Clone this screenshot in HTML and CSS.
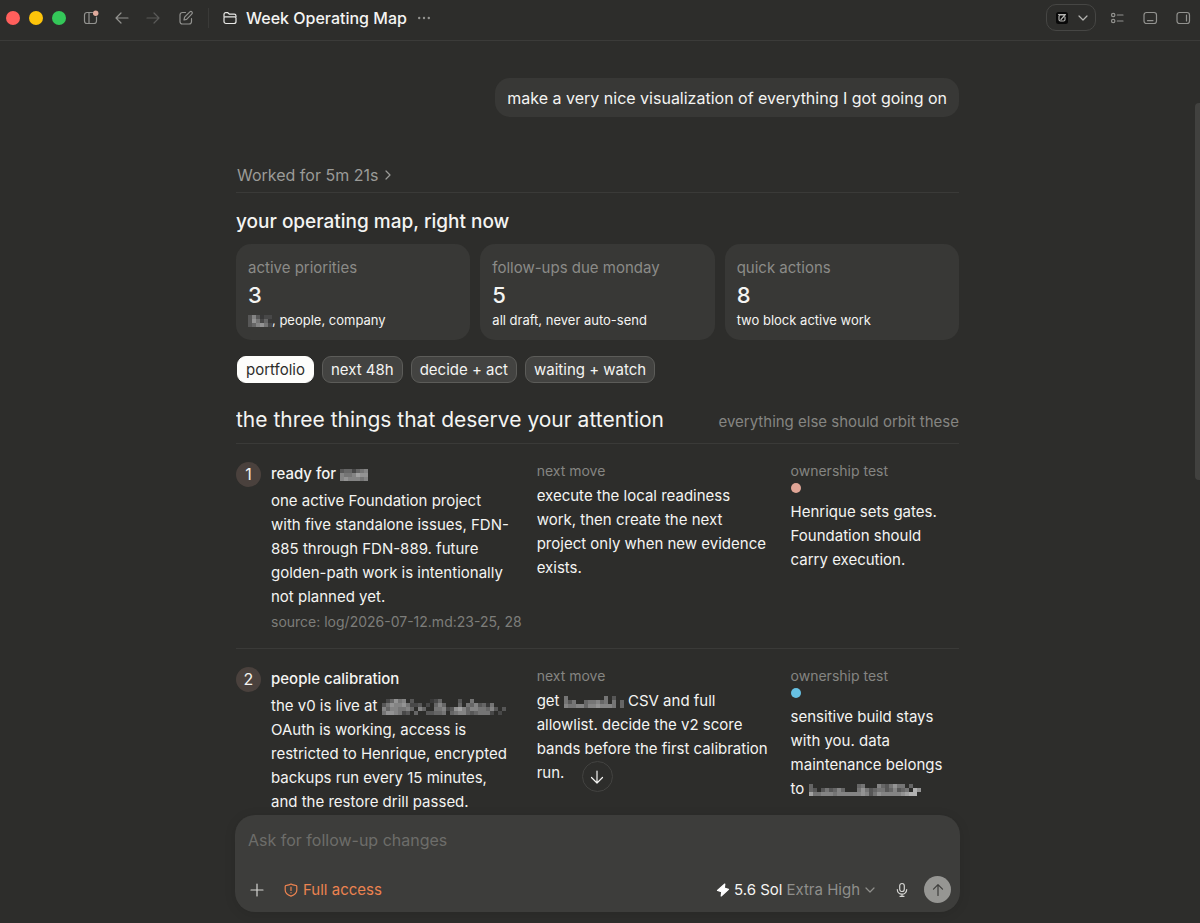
FILE: index.html
```html
<!DOCTYPE html>
<html lang="en">
<head>
<meta charset="utf-8">
<title>Week Operating Map</title>
<link rel="stylesheet" href="styles.css">
</head>
<body>
<header class="topbar">
  <div class="lights"><span class="light red"></span><span class="light yellow"></span><span class="light green"></span></div>
  <nav class="tools" aria-label="Window">
    <button class="icon-btn" aria-label="Toggle sidebar"><svg width="18" height="18" viewBox="0 0 18 18"><path d="M10.500 3.500H5A2.500 2.500 0 0 0 2.500 6v6A2.500 2.500 0 0 0 5 14.500h7A2.500 2.500 0 0 0 14.500 12V8M7 3.500v11"/><circle class="notice" cx="13.700" cy="4.300" r="2.700"/></svg></button>
    <button class="icon-btn" aria-label="Back"><svg width="18" height="18" viewBox="0 0 18 18"><path d="M15 9H3.500M8 4 3 9l5 5"/></svg></button>
    <button class="icon-btn dim" aria-label="Forward"><svg width="18" height="18" viewBox="0 0 18 18"><path d="M3 9h11.500M10 4l5 5-5 5"/></svg></button>
    <button class="icon-btn compose" aria-label="New chat"><svg width="18" height="18" viewBox="0 0 18 18"><path d="M8.500 3.500H5.500A2.500 2.500 0 0 0 3 6v6.500A2.500 2.500 0 0 0 5.500 15H12a2.500 2.500 0 0 0 2.500-2.500v-3M7 11l.6-2.800 5.300-5.300a1.300 1.300 0 0 1 2 2L9.600 10.300z"/></svg></button>
  </nav>
  <div class="title-group">
    <svg class="folder" width="16" height="16" viewBox="0 0 16 16"><path d="M2 6.800V4.500A1.800 1.800 0 0 1 3.800 2.700h2l1.700 1.500h4.700A1.800 1.800 0 0 1 14 6v.8M3.300 6.800h9.400a1.300 1.300 0 0 1 1.300 1.300v3.400a2 2 0 0 1-2 2H4a2 2 0 0 1-2-2V8.100a1.300 1.300 0 0 1 1.300-1.300z"/></svg>
    <h1 class="title">Week Operating Map</h1>
    <button class="icon-btn more" aria-label="More"><svg width="18" height="18" viewBox="0 0 18 18"><g class="solid"><circle cx="4.200" cy="9" r="1.200"/><circle cx="9" cy="9" r="1.200"/><circle cx="13.800" cy="9" r="1.200"/></g></svg></button>
  </div>
  <div class="right-tools">
    <button class="open-in" aria-label="Open in"><svg width="14" height="14" viewBox="0 0 14 14"><rect class="app" x="1" y="1" width="12" height="12" rx="2.500"/><path d="M10 6v2.500A1.500 1.500 0 0 1 8.500 10h-3A1.500 1.500 0 0 1 4 8.500v-3A1.500 1.500 0 0 1 5.500 4H10L6 8.500M3.500 3.500h7"/></svg><svg width="12" height="12" viewBox="0 0 12 12"><path d="m2 4 4 4 4-4"/></svg></button>
    <button class="icon-btn" aria-label="Tasks"><svg width="18" height="18" viewBox="0 0 18 18"><circle cx="5.200" cy="6" r="1.700"/><circle cx="5.200" cy="12" r="1.700"/><path d="M9.300 6H15M9.300 12H15"/></svg></button>
    <button class="icon-btn" aria-label="Bottom panel"><svg width="18" height="18" viewBox="0 0 18 18"><rect x="3" y="3.500" width="12.500" height="11" rx="2.500"/><path d="M6.500 11.700h5.500"/></svg></button>
    <button class="icon-btn" aria-label="Side panel"><svg width="18" height="18" viewBox="0 0 18 18"><rect x="3" y="3.500" width="12.500" height="11" rx="2.500"/><path d="M12.500 6v6"/></svg></button>
  </div>
</header>

<div class="workspace">
  <div class="pane">
    <main class="conversation">
      <p class="bubble">make a very nice visualization of everything I got going on</p>
      <button class="worked">Worked for 5m 21s <svg width="10" height="10" viewBox="0 0 10 10"><path d="m3 1 4 4-4 4"/></svg></button>

      <h2 class="heading">your operating map, right now</h2>
      <div class="stats">
        <section class="stat"><h3 class="stat-label">active priorities</h3><p class="stat-value">3</p><p class="stat-note"><span class="mosaic" data-rows="585344 597463 568974"></span>, people, company</p></section>
        <section class="stat"><h3 class="stat-label">follow-ups due monday</h3><p class="stat-value">5</p><p class="stat-note">all draft, never auto-send</p></section>
        <section class="stat"><h3 class="stat-label">quick actions</h3><p class="stat-value">8</p><p class="stat-note">two block active work</p></section>
      </div>

      <div class="chips">
        <button class="chip selected">portfolio</button>
        <button class="chip">next 48h</button>
        <button class="chip">decide + act</button>
        <button class="chip">waiting + watch</button>
      </div>

      <div class="section-head">
        <h2 class="section-title">the three things that deserve your attention</h2>
        <p class="section-note">everything else should orbit these</p>
      </div>

      <article class="priority">
        <div class="summary">
          <span class="number">1</span>
          <div class="summary-text">
            <h3 class="name">ready for <span class="mosaic" data-rows="5664678 8778a99 8988878"></span></h3>
            <p class="copy">one active Foundation project with five standalone issues, FDN-<wbr>885 through FDN-889. future golden-path work is intentionally not planned yet.</p>
            <p class="source">source: log/2026-07-12.md:23-25, 28</p>
          </div>
        </div>
        <div class="detail"><h4 class="label">next move</h4><p class="copy">execute the local readiness work, then create the next project only when new evidence exists.</p></div>
        <div class="detail"><h4 class="label">ownership test</h4><span class="dot coral"></span><p class="copy">Henrique sets gates. Foundation should carry execution.</p></div>
      </article>

      <article class="priority">
        <div class="summary">
          <span class="number">2</span>
          <div class="summary-text">
            <h3 class="name">people calibration</h3>
            <p class="copy">the v0 is live at <span class="mosaic tall" data-rows="0469780500003460000500700000000 5798897445040686000607685637000 8688778608600778459a868877685050 7998745060055667067886567774040"></span> OAuth is working, access is restricted to Henrique, encrypted backups run every 15 minutes, and the restore drill passed.</p>
          </div>
        </div>
        <div class="detail"><h4 class="label">next move</h4><p class="copy">get <span class="mosaic" data-rows="700000000070500 757006778670706 877886889888706"></span> CSV and full allowlist. decide the v2 score bands before the first calibration run.</p></div>
        <div class="detail"><h4 class="label">ownership test</h4><span class="dot blue"></span><p class="copy">sensitive build stays with you. data maintenance belongs to <span class="mosaic" data-rows="6000000000006700086579770600 65057568600079756775685670b9 a77888788888898579888889abb0"></span></p></div>
      </article>
    </main>

    <div class="composer-area">
      <button class="jump" aria-label="Scroll to bottom"><svg width="18" height="18" viewBox="0 0 18 18"><path d="M9 3v12M3.500 9.500 9 15l5.500-5.500"/></svg></button>
      <form class="composer">
        <textarea class="prompt" rows="1" placeholder="Ask for follow-up changes" aria-label="Message"></textarea>
        <div class="composer-bar">
          <button type="button" class="plain" aria-label="Add"><svg width="18" height="18" viewBox="0 0 18 18"><path d="M9 3v12M3 9h12"/></svg></button>
          <button type="button" class="plain access"><svg width="14" height="14" viewBox="0 0 14 14"><path d="M7 1C8.500 2 10 2.200 11.600 2.300c.7 0 1.200.5 1.200 1.200V7c0 3.200-2.800 5.100-5.800 6.100C4 12.100 1.200 10.200 1.200 7V3.500c0-.7.5-1.200 1.200-1.200C4 2.200 5.500 2 7 1zM7 4.200v3.200M7 9.500v.3"/></svg>Full access</button>
          <button type="button" class="plain model"><svg width="14" height="14" viewBox="0 0 14 14"><path class="bolt" d="M8.800 1 1.500 7.500l4.200 1.300L5.200 13l7.300-6.600-4.200-1.200z"/></svg><span class="model-name">5.6 Sol</span><span class="effort">Extra High</span><svg class="caret" width="12" height="12" viewBox="0 0 12 12"><path d="m2 4 4 4 4-4"/></svg></button>
          <button type="button" class="plain" aria-label="Dictate"><svg width="16" height="16" viewBox="0 0 16 16"><rect x="5.700" y="1.500" width="4.600" height="8" rx="2.300"/><path d="M3.300 7.500a4.700 4.700 0 0 0 9.400 0M8 12.200V14M6 14.300h4"/></svg></button>
          <button class="send" aria-label="Send"><svg width="18" height="18" viewBox="0 0 18 18"><path d="M9 14.500V4M4.500 8.200 9 3.700l4.500 4.500"/></svg></button>
        </div>
      </form>
    </div>
  </div>
  <div class="scroll-track"><div class="scroll-thumb"></div></div>
</div>
<script src="mosaic.js"></script>
</body>
</html>
```
FILE: styles.css
```css
* { box-sizing: border-box; }
body {
  margin: 0;
  height: 100vh;
  display: flex;
  flex-direction: column;
  overflow: hidden;
  background: #2d2d2b;
  color: #f4f4f2;
  font: 16px/24px Inter, "Liberation Sans", sans-serif;
}
h1, h2, h3, h4, p { margin: 0; font-weight: 400; }
button { margin: 0; padding: 0; border: 0; background: none; color: inherit; font: inherit; }
svg { display: block; flex: none; fill: none; stroke: currentColor; stroke-width: 1.2; stroke-linecap: round; stroke-linejoin: round; }

.topbar {
  flex: none;
  height: 41px;
  padding: 0 8px 5px 6px;
  display: flex;
  align-items: center;
  border-bottom: 1px solid #3b3b39;
}
.lights { display: flex; gap: 9px; }
.light { width: 14px; height: 14px; border-radius: 50%; }
.red { background: #ff5f5c; }
.yellow { background: #fdc40a; }
.green { background: #34c759; }
.tools { display: flex; align-items: center; gap: 13px; margin-left: 16px; }
.icon-btn { color: #92928f; }
.dim { color: #5a5a58; }
.compose { margin-left: 2px; }
.notice { fill: #e0aa9c; stroke: none; }
.solid { fill: currentColor; stroke: none; }
.title-group {
  display: flex;
  align-items: center;
  margin-left: 13px;
  padding-left: 13px;
  border-left: 1px solid #3a3a38;
}
.folder { color: #e8e8e6; }
.title { margin: 0 8px; font-size: 16px; line-height: 20px; font-weight: 500; }
.right-tools { display: flex; align-items: center; gap: 15px; margin-left: auto; }
.open-in {
  display: flex;
  align-items: center;
  gap: 8px;
  height: 27px;
  padding: 0 6px 0 8px;
  margin-right: -3px;
  border: 1px solid #464644;
  border-radius: 10px;
  color: #b5b5b2;
}
.app { fill: #090909; stroke: none; }

.workspace { flex: 1; min-height: 0; display: flex; }
.pane { flex: 1; min-width: 0; display: flex; flex-direction: column; }
.conversation {
  flex: 1;
  min-height: 0;
  overflow: hidden;
  width: 100%;
  max-width: 723px;
  margin: 0 auto;
  padding-top: 37px;
  display: flex;
  flex-direction: column;
}
.conversation > * { flex: none; }
.bubble { align-self: flex-end; padding: 8px 12px 7px; border-radius: 15px; background: #383836; font-size: 16px; }
.worked {
  display: flex;
  align-items: center;
  gap: 5px;
  margin-top: 46px;
  padding: 0 0 5px 1px;
  border-bottom: 1px solid #3a3a38;
  color: #9b9b98;
}
.heading { margin-top: 17px; font-size: 19px; font-weight: 500; }
.stats { display: grid; grid-template-columns: repeat(3, 1fr); gap: 10px; margin-top: 10px; }
.stat { padding: 12px 12px 9px; border-radius: 15px; background: #383836; }
.stat-label { color: #8b8b88; font-size: 15px; }
.stat-value { margin-top: 1px; font-size: 22px; line-height: 28px; font-weight: 500; }
.stat-note { font-size: 13px; line-height: 22px; }
.chips { display: flex; flex-wrap: wrap; gap: 8px; margin-top: 16px; padding-left: 1px; }
.chip { height: 27px; padding: 0 8px; border: 1px solid #5c5c59; border-radius: 9px; background: #434341; font-size: 15px; line-height: 25px; }
.selected { background: #fdfdfb; border-color: #fdfdfb; color: #2d2d2b; }
.section-head { display: flex; align-items: baseline; justify-content: space-between; margin-top: 21px; padding-bottom: 7px; border-bottom: 1px solid #3a3a38; }
.section-title { font-size: 21px; line-height: 32px; }
.section-note { color: #858582; font-size: 15px; }

.priority { display: grid; grid-template-columns: minmax(0, 1.2fr) minmax(0, 1fr) minmax(0, 0.72fr); gap: 20px; padding: 18px 0 16px; }
.priority + .priority { border-top: 1px solid #3a3a38; }
.summary { display: flex; gap: 10px; }
.number { flex: none; width: 25px; height: 25px; border-radius: 50%; background: #4a413d; text-align: center; line-height: 25px; }
.summary-text { flex: 1; min-width: 0; }
.name { font-size: 15px; font-weight: 500; }
.summary .copy { margin-top: 3px; padding-right: 4px; }
.copy { font-size: 15px; }
.source { margin-top: 3px; color: #7d7d7a; font-size: 14px; line-height: 20px; white-space: nowrap; }
.label { color: #858582; font-size: 14px; line-height: 18px; }
.detail .copy { margin-top: 4px; }
.detail .dot + .copy { margin-top: 7px; }
.dot { display: block; width: 10px; height: 10px; margin-top: 3px; border-radius: 50%; }
.coral { background: #e0a596; }
.blue { background: #67c1e3; }
.mosaic { display: inline-block; vertical-align: -2px; }
.tall { vertical-align: -4px; }
.mosaic svg { stroke: none; shape-rendering: crispEdges; }

.composer-area { position: relative; flex: none; width: 100%; max-width: 725px; margin: 0 auto; padding-bottom: 11px; }
.jump {
  position: absolute;
  top: -54px;
  left: 50%;
  margin-left: -16px;
  width: 31px;
  height: 31px;
  display: grid;
  place-items: center;
  border: 1px solid #434341;
  border-radius: 50%;
  background: #2d2d2b;
}
.composer { padding: 13px 9px 9px 13px; border-radius: 20px; background: #3d3d3b; box-shadow: 0 2px 12px #0000001a; }
.prompt { display: block; width: 100%; height: 48px; padding: 0; border: 0; outline: 0; resize: none; background: none; color: inherit; font: inherit; }
.prompt::placeholder { color: #6d6d6a; opacity: 1; }
.composer-bar { display: flex; align-items: center; }
.plain { display: flex; align-items: center; font-size: 15px; color: #d5d5d2; }
.access { gap: 5px; margin-left: 18px; color: #ec8350; }
.model { gap: 4px; margin-left: auto; margin-right: 18px; }
.model-name { color: #f4f4f2; }
.effort, .caret { color: #8f8f8c; }
.bolt { fill: #fff; stroke: #fff; }
.send { display: grid; place-items: center; width: 27px; height: 27px; margin-left: 14px; border-radius: 50%; background: #969693; color: #3d3d3b; }

.scroll-track { flex: none; width: 5px; padding-top: 62px; }
.scroll-thumb { height: 46%; border-radius: 4px 0 0 4px; background: #41413f; }
```
FILE: mosaic.js
```js
// Draws redacted names as a grid of grey cells; each hex digit is a shade, 0 is empty.
const CELL = 4;
document.querySelectorAll(".mosaic").forEach((el) => {
  const rows = el.dataset.rows.split(" ");
  const columns = Math.max(...rows.map((row) => row.length));
  let cells = "";
  rows.forEach((row, y) => {
    [...row].forEach((digit, x) => {
      const level = parseInt(digit, 16);
      if (!level) return;
      const grey = 12 + level * 15;
      cells += `<rect x="${x * CELL}" y="${y * CELL}" width="${CELL}" height="${CELL}" fill="rgb(${grey},${grey},${grey})"/>`;
    });
  });
  el.innerHTML = `<svg width="${columns * CELL}" height="${rows.length * CELL}">${cells}</svg>`;
});
```
